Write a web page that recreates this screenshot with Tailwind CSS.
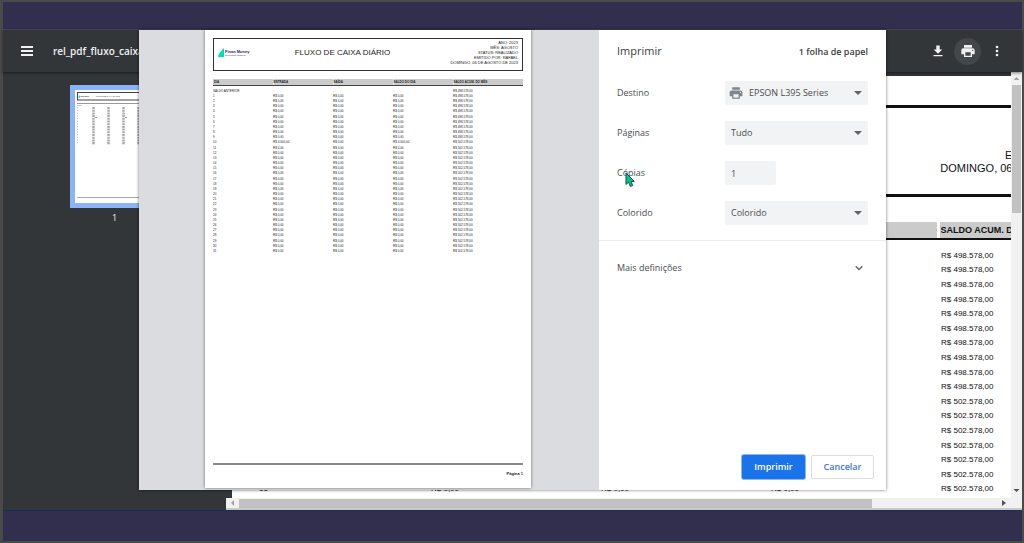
<!DOCTYPE html>
<html lang="pt">
<head>
<meta charset="utf-8">
<title>Imprimir – rel_pdf_fluxo_caixa</title>
<script src="https://cdn.jsdelivr.net/npm/@tailwindcss/browser@4"></script>
</head>
<body class="h-screen overflow-hidden bg-[#312f4d] font-['Open_Sans','Noto_Sans',sans-serif]">
<div class="flex h-screen flex-col border-y-2 border-r-2 border-l-3 border-[#4a4a4a]">
  <div class="h-7 shrink-0 border-b border-[#4b4a5e]"></div>

  <div class="relative flex min-h-0 flex-1 flex-col bg-[#323639]">
    <header class="z-10 flex h-[42px] shrink-0 items-center justify-between pr-[19px] pl-[18px] text-[#f1f1f1] shadow-[0_1px_3px_rgba(0,0,0,0.5)]">
      <div class="flex items-center gap-5">
        <button aria-label="Menu" class="block"><svg class="h-3 w-3" viewBox="0 0 12 12" fill="currentColor"><path d="M0 1h12v2H0zM0 5h12v2H0zM0 9h12v2H0z"/></svg></button>
        <h1 class="text-[10px] font-semibold">rel_pdf_fluxo_caixa_diario</h1>
      </div>
      <div class="flex items-center gap-[10px]">
        <button aria-label="Transferir"><svg class="h-3 w-3" viewBox="0 0 12 12" fill="currentColor"><path d="M4.3 0.5h3.4v4h2.6L6 8.700 1.700 4.500h2.600zM1.500 10h9v1.300h-9z"/></svg></button>
        <button aria-label="Imprimir" class="flex h-[27px] w-[27px] items-center justify-center rounded-full bg-[#44474a]"><svg class="h-4 w-4" viewBox="0 0 24 24" fill="currentColor"><path d="M19 8H5c-1.660 0-3 1.340-3 3v6h4v4h12v-4h4v-6c0-1.660-1.340-3-3-3zm-3 11H8v-5h8v5zm3-7c-.55 0-1-.45-1-1s.45-1 1-1 1 .45 1 1-.45 1-1 1zM18 3H6v4h12V3z"/></svg></button>
        <button aria-label="Mais ações"><svg class="h-3 w-3" viewBox="0 0 12 12" fill="currentColor"><circle cx="6" cy="2" r="1.300"/><circle cx="6" cy="6" r="1.300"/><circle cx="6" cy="10" r="1.300"/></svg></button>
      </div>
    </header>

    <div class="flex min-h-0 flex-1">
      <aside class="flex w-[223px] shrink-0 flex-col items-center pt-[13px] text-[9px] text-[#f1f1f1]">
        <button class="w-[90px] border-5 border-[#8ab4f8] bg-white" aria-label="Página 1">
          <svg class="block h-[113px] w-full" viewBox="0 0 80 113" font-family="Liberation Sans, Arial, sans-serif">
            <rect x="2.500" y="2.500" width="75" height="7.500" fill="none" stroke="#444"/>
            <path d="M3 7.500l2-2.500v2.500z" fill="#00d9b0"/>
            <text x="5" y="7.200" font-size="1.500" fill="#2a2470" font-weight="bold">Finan Money</text>
            <text x="21" y="7" font-size="2" fill="#222">FLUXO DE CAIXA DIÁRIO</text>
            <path d="M2 13.500h76" stroke="#999"/>
            <path d="M2 15.500h5" stroke="#bbb" stroke-width=".7"/>
            <path d="M18.500 17v38M33.500 17v38M48.500 17v38M63.500 17v38" stroke="#aaa" stroke-width="2.500" stroke-dasharray="2 .7"/>
            <path d="M2.500 17v38" stroke="#ccc" stroke-width="1" stroke-dasharray="1.500 1.200"/>
            <path d="M20 27.500h2M50 27.500h2" stroke="#999" stroke-width="1"/>
            <path d="M2 107.500h76" stroke="#aaa"/>
          </svg>
        </button>
        <span class="mt-1 leading-3">1</span>
      </aside>

      <div class="flex min-w-0 flex-1 flex-col">
        <div class="flex min-h-0 flex-1">
          <main class="min-w-0 flex-1 overflow-hidden pt-1 pl-[6px]">
            <article class="w-[923px] bg-white px-6 pt-[29px] pb-20 font-['Liberation_Sans',Arial,sans-serif] text-[11px] text-[#111]">
              <div class="h-[92px] border-3 border-[#111] px-[2px] pt-[2px] text-right leading-[13px]">
                <p>ANO: 2023</p><p>MÊS: AGOSTO</p><p>STATUS: REALIZADO</p><p>EMITIDO POR: RAFAEL</p><p>DOMINGO, 06 DE AGOSTO DE 2023</p>
              </div>
              <table class="mt-[25px] w-full table-fixed text-left leading-[14px]">
                <colgroup><col class="w-[172px]"><col class="w-[170px]"><col class="w-[170px]"><col class="w-[170px]"><col></colgroup>
                <thead class="text-[9px]"><tr class="h-4">
                  <th class="bg-[#cbcbcb] pl-1">DIA</th><th class="border-l-2 border-white bg-[#cbcbcb]">ENTRADA</th><th class="border-l-2 border-white bg-[#cbcbcb]">SAÍDA</th><th class="border-l-2 border-white bg-[#cbcbcb]">SALDO DO DIA</th><th class="border-l-3 border-white bg-[#cbcbcb] pl-px">SALDO ACUM. DO MÊS</th>
                </tr></thead>
                <tbody id="doc" class="text-[8px]"><tr><td colspan="5" class="h-[2px] bg-[#111]"></td></tr><tr class="h-2"></tr></tbody>
              </table>
            </article>
          </main>
          <div class="flex w-[11px] shrink-0 flex-col items-center bg-[#f1f1f1]" aria-hidden="true">
            <svg class="h-[13px] w-[11px]" viewBox="0 0 11 13"><path d="M2.500 8l3-3 3 3z" fill="#a3a3a3"/></svg>
            <div class="h-32 w-[9px] bg-[#c1c1c1]"></div>
            <svg class="mt-auto h-[13px] w-[11px]" viewBox="0 0 11 13"><path d="M2.500 4l3 3 3-3z" fill="#505050"/></svg>
          </div>
        </div>
        <div class="flex h-3 shrink-0 items-center border-b-2 border-[#c9c9c9] bg-[#f1f1f1]" aria-hidden="true">
          <svg class="h-[10px] w-[13px]" viewBox="0 0 13 10"><path d="M8 2v6L5 5z" fill="#a3a3a3"/></svg>
          <div class="h-[9px] w-[633px] bg-[#c1c1c1]"></div>
          <svg class="mr-3 ml-auto h-[10px] w-[13px]" viewBox="0 0 13 10"><path d="M5 2v6l4-3z" fill="#505050"/></svg>
        </div>
      </div>
    </div>

    <section role="dialog" aria-label="Imprimir" class="absolute inset-x-[136px] top-0 bottom-5 z-20 flex bg-white shadow-[0_0_3px_rgba(0,0,0,0.55)]">
      <div class="flex flex-1 bg-[#dadce0] pb-[2px] pl-[66px]">
        <article class="flex w-[326px] flex-col bg-white p-2 font-['Liberation_Sans',Arial,sans-serif] text-[4px] text-[#222] shadow-[0_0_3px_rgba(0,0,0,0.5)]">
          <div class="grid h-[33px] grid-cols-[76px_105px_1fr] border border-[#333]">
            <div class="flex items-center pb-1 pl-1">
              <svg class="h-[9px] w-[7px]" viewBox="0 0 7 9"><path d="M6 0v9H0C0 6 3 3 6 0z" fill="#00e0b4"/></svg>
              <div class="font-bold text-[#2a2470]"><p class="text-[4px] leading-[5px]">Finan Money</p><p class="text-[2px] leading-[2px] font-normal">Seu controle financeiro</p></div>
            </div>
            <h2 class="pt-2 text-center text-[8px] leading-[11px] whitespace-nowrap">FLUXO DE CAIXA DIÁRIO</h2>
            <div class="pt-px pr-1 text-right leading-[5px] whitespace-nowrap"><p>ANO: 2023</p><p>MÊS: AGOSTO</p><p>STATUS: REALIZADO</p><p>EMITIDO POR: RAFAEL</p><p>DOMINGO, 06 DE AGOSTO DE 2023</p></div>
          </div>
          <table class="mt-2 w-full table-fixed text-left text-[3px] leading-[5px]">
            <colgroup><col class="w-[60px]"><col class="w-[60px]"><col class="w-[60px]"><col class="w-[60px]"><col></colgroup>
            <thead><tr class="h-[6px]">
              <th class="bg-[#cbcbcb] pl-px">DIA</th><th class="border-l border-[#eee] bg-[#cbcbcb]">ENTRADA</th><th class="border-l border-[#eee] bg-[#cbcbcb]">SAÍDA</th><th class="border-l border-[#eee] bg-[#cbcbcb]">SALDO DO DIA</th><th class="border-l border-[#eee] bg-[#cbcbcb]">SALDO ACUM. DO MÊS</th>
            </tr></thead>
            <tbody id="preview"><tr><td colspan="5" class="h-px bg-[#444]"></td></tr><tr class="h-[3px]"></tr></tbody>
          </table>
          <footer class="mt-auto border-t-2 border-[#888] pt-[6px] pb-1 text-right leading-[5px] font-bold">Página 1</footer>
        </article>
      </div>

      <form class="flex w-[287px] shrink-0 flex-col text-[9px] text-[#4a4d51]">
        <div class="flex h-[43px] items-center justify-between px-[18px]">
          <h2 class="text-[11px] text-[#3c4043]">Imprimir</h2><span class="font-semibold text-[#3c4043]">1 folha de papel</span>
        </div>
        <div class="flex flex-col gap-4 border-b border-[#ececec] px-[18px] pt-2 pb-[15px]">
          <div class="flex items-center justify-between">
            <label for="dest">Destino</label>
            <div class="relative w-[143px]">
              <select id="dest" class="block h-6 w-full appearance-none rounded-xs bg-[#f1f3f4] pl-6"><option>EPSON L395 Series</option></select>
              <svg class="pointer-events-none absolute top-[5px] left-1 h-[14px] w-[14px]" viewBox="1 2 22 20" fill="#80868b"><path d="M19 8H5c-1.660 0-3 1.340-3 3v6h4v4h12v-4h4v-6c0-1.660-1.340-3-3-3zm-3 11H8v-5h8v5zm3-7c-.55 0-1-.45-1-1s.45-1 1-1 1 .45 1 1-.45 1-1 1zM18 3H6v4h12V3z"/></svg>
              <svg class="pointer-events-none absolute top-[10px] right-[6px] h-1 w-2" viewBox="0 0 8 4" fill="#5f6368"><path d="M0 0h8L4 4z"/></svg>
            </div>
          </div>
          <div class="flex items-center justify-between">
            <label for="pages">Páginas</label>
            <div class="relative w-[143px]">
              <select id="pages" class="block h-6 w-full appearance-none rounded-xs bg-[#f1f3f4] pl-[6px]"><option>Tudo</option></select>
              <svg class="pointer-events-none absolute top-[10px] right-[6px] h-1 w-2" viewBox="0 0 8 4" fill="#5f6368"><path d="M0 0h8L4 4z"/></svg>
            </div>
          </div>
          <div class="flex items-center justify-between">
            <label for="copies" class="relative">Cópias
              <svg class="absolute top-[6px] left-2 h-4 w-[10px]" viewBox="0 0 10 16"><path d="M1 1v11.500l2.600-2.300 1.800 4.300 2.300-1-1.800-4.100H9.300z" fill="#00c795" stroke="#1d4a40" stroke-linejoin="round"/></svg>
            </label>
            <div class="w-[143px]"><input id="copies" type="text" inputmode="numeric" value="1" class="block h-6 w-[51px] rounded-xs bg-[#f1f3f4] pl-[6px]"></div>
          </div>
          <div class="flex items-center justify-between">
            <label for="color">Colorido</label>
            <div class="relative w-[143px]">
              <select id="color" class="block h-6 w-full appearance-none rounded-xs bg-[#f1f3f4] pl-[6px]"><option>Colorido</option></select>
              <svg class="pointer-events-none absolute top-[10px] right-[6px] h-1 w-2" viewBox="0 0 8 4" fill="#5f6368"><path d="M0 0h8L4 4z"/></svg>
            </div>
          </div>
        </div>
        <button type="button" class="flex h-[54px] items-center justify-between pr-[23px] pl-[18px]">Mais definições
          <svg class="h-2 w-2" viewBox="0 0 8 8" fill="none" stroke="#5f6368" stroke-width="1.300"><path d="M.7 2.200L4 5.500l3.300-3.300"/></svg>
        </button>
        <div class="mt-auto flex justify-end gap-[6px] pr-3 pb-[11px] font-semibold">
          <button type="button" class="h-6 w-[63px] rounded-xs bg-[#1a73e8] text-white shadow-[0_0_0_1px_#8ab8f5]">Imprimir</button>
          <button type="button" class="h-6 w-[63px] rounded-xs border border-[#dadce0] text-[#3f74e8]">Cancelar</button>
        </div>
      </form>
    </section>
  </div>
  <div class="h-[31px] shrink-0 border-t border-[#1c2c50]"></div>
</div>
<script>
  const rows = [['SALDO ANTERIOR', '-', '-', '-', 'R$ 498.578,00']];
  for (let d = 1; d <= 31; d++) {
    const v = d === 10 ? 'R$ 4.000,00' : 'R$ 0,00';
    rows.push([d, v, 'R$ 0,00', v, d < 10 ? 'R$ 498.578,00' : 'R$ 502.578,00']);
  }
  const fill = (id, cls, cell) => rows.forEach((r, i) => {
    document.getElementById(id).insertAdjacentHTML('beforeend',
      `<tr class="${cls(i)}">` + r.map(c => `<td class="${cell}">${c}</td>`).join('') + '</tr>');
  });
  fill('doc', i => i % 5 === 1 || i % 5 === 4 ? 'h-[14px]' : 'h-[15px]', 'pl-[3px] whitespace-nowrap');
  fill('preview', i => i % 6 === 5 ? 'h-[6px]' : 'h-[5px]', 'whitespace-nowrap');
</script>
</body>
</html>
